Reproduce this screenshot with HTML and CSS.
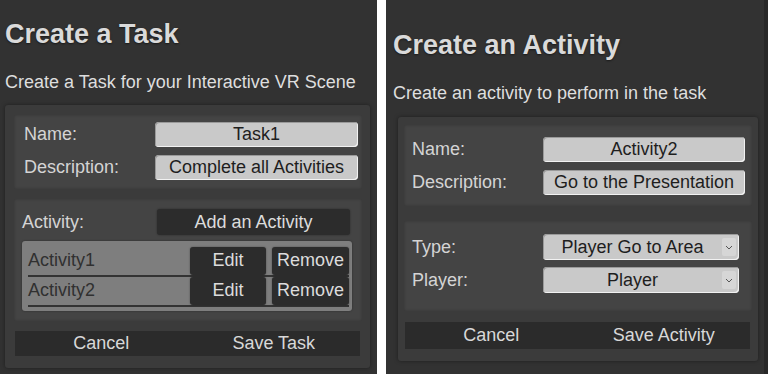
FILE: index.html
```html
<!DOCTYPE html>
<html lang="en">
<head>
    <meta charset="utf-8">
    <title>Task Editor</title>
    <link rel="stylesheet" href="styles.css">
</head>
<body>
    <div class="screens">
        <!-- Pannello task -->
        <div class="panel panel-task">
            <div class="title">Create a Task</div>
            <div class="subtitle">Create a Task for your Interactive VR Scene</div>
            <div class="card">
                <div class="section sec-info">
                    <div class="row">
                        <span class="label">Name:</span>
                        <div class="field">Task1</div>
                    </div>
                    <div class="row">
                        <span class="label">Description:</span>
                        <div class="field">Complete all Activities</div>
                    </div>
                </div>
                <div class="section sec-activities">
                    <div class="row">
                        <span class="label">Activity:</span>
                        <button class="dark-btn add-btn">Add an Activity</button>
                    </div>
                    <div class="activity-list">
                        <div class="activity">
                            <span class="activity-name">Activity1</span>
                            <button class="dark-btn small-btn">Edit</button>
                            <button class="dark-btn small-btn">Remove</button>
                        </div>
                        <div class="activity">
                            <span class="activity-name">Activity2</span>
                            <button class="dark-btn small-btn">Edit</button>
                            <button class="dark-btn small-btn">Remove</button>
                        </div>
                    </div>
                </div>
                <div class="actions">
                    <button class="action">Cancel</button>
                    <button class="action">Save Task</button>
                </div>
            </div>
        </div>

        <!-- Pannello activity -->
        <div class="panel panel-activity">
            <div class="title">Create an Activity</div>
            <div class="subtitle">Create an activity to perform in the task</div>
            <div class="card">
                <div class="section sec-info">
                    <div class="row">
                        <span class="label">Name:</span>
                        <div class="field">Activity2</div>
                    </div>
                    <div class="row">
                        <span class="label">Description:</span>
                        <div class="field">Go to the Presentation</div>
                    </div>
                </div>
                <div class="section sec-type">
                    <div class="row">
                        <span class="label">Type:</span>
                        <div class="field select">
                            <span class="select-value">Player Go to Area</span>
                            <span class="select-arrow"><svg width="8" height="5" viewBox="0 0 8 5"><path d="M1 1 L4 4 L7 1" fill="none" stroke="#555" stroke-width="1"/></svg></span>
                        </div>
                    </div>
                    <div class="row">
                        <span class="label">Player:</span>
                        <div class="field select">
                            <span class="select-value">Player</span>
                            <span class="select-arrow"><svg width="8" height="5" viewBox="0 0 8 5"><path d="M1 1 L4 4 L7 1" fill="none" stroke="#555" stroke-width="1"/></svg></span>
                        </div>
                    </div>
                </div>
                <div class="actions">
                    <button class="action">Cancel</button>
                    <button class="action">Save Activity</button>
                </div>
            </div>
        </div>
    </div>
</body>
</html>
```

FILE: styles.css
```css
body {
    margin: 0;
    background-color: #ffffff;
    font-family: 'Liberation Sans', Arial, sans-serif;
}
.screens {
    display: flex;
    gap: 9px;
    height: 374px;
}
.panel {
    background-color: #323232;
    color: #d6d6d6;
    box-sizing: border-box;
    height: 374px;
}
.panel-task {
    width: 377px;
    padding: 19px 7px 0 5px;
}
.panel-activity {
    width: 382px;
    padding: 30px 6px 0 7px;
    border-right: 4px solid #282828;
}
.title {
    font-size: 27px;
    font-weight: bold;
    line-height: 30px;
    color: #dadada;
    text-shadow: 0 1px 2px rgba(0, 0, 0, 0.5);
}
.subtitle {
    font-size: 18px;
    line-height: 21px;
    margin-top: 23px;
    color: #dedede;
}
.card {
    background-color: #3b3b3b;
    box-shadow: 0 0 4px rgba(0, 0, 0, 0.4);
    border-radius: 3px;
    display: flex;
    flex-direction: column;
}
.panel-task .card {
    margin-top: 12px;
    padding: 10px 8px 12px 9px;
    gap: 10px;
}
.panel-activity .card {
    margin: 13px 0 0 5px;
    padding: 8px 6px 12px 6px;
}
.section {
    background-color: #444444;
    display: flex;
    flex-direction: column;
    box-shadow: inset 0 0 3px rgba(0, 0, 0, 0.25);
}
.panel-task .sec-info {
    padding: 7px 4px 9px 10px;
    gap: 8px;
}
.panel-task .sec-activities {
    padding: 10px 10px 10px 8px;
    gap: 6px;
}
.panel-activity .sec-info {
    padding: 12px 7px 11px 8px;
    gap: 8px;
}
.panel-activity .sec-type {
    margin-top: 15px;
    padding: 13px 13px 18px 8px;
    gap: 7px;
}
.panel-activity .actions {
    margin-top: 11px;
}
.row {
    display: flex;
    align-items: center;
    justify-content: space-between;
}
.label {
    font-size: 18px;
    line-height: 21px;
    color: #d4d4d4;
}
.field {
    width: 203px;
    height: 25px;
    box-sizing: border-box;
    background-color: #c9c9c9;
    border-radius: 4px;
    box-shadow: inset -1px -1px 0 #f2f2f2, inset 1px 1px 0 #9a9a9a;
    color: #1e1e1e;
    font-size: 18px;
    display: flex;
    align-items: center;
    justify-content: center;
}
.panel-activity .field {
    width: 202px;
}
.panel-activity .field.select {
    width: 196px;
    height: 26px;
    justify-content: space-between;
    padding: 0 3px 0 0;
}
.select-value {
    flex: 1;
    text-align: center;
}
.select-arrow {
    width: 14px;
    height: 18px;
    background-color: #d6d6d6;
    border-radius: 2px;
    display: flex;
    align-items: center;
    justify-content: center;
}
.dark-btn {
    background-color: #2c2c2c;
    color: #dcdcdc;
    border: none;
    border-radius: 3px;
    font-family: 'Liberation Sans', Arial, sans-serif;
    font-size: 18px;
    padding: 0;
    box-shadow: 0 0 2px rgba(0, 0, 0, 0.4);
}
.add-btn {
    width: 193px;
    height: 26px;
    margin-right: 2px;
}
.activity-list {
    background-color: #7e7e7e;
    border-radius: 3px;
    padding: 6px 3px 4px 6px;
    box-shadow: 0 0 2px rgba(0, 0, 0, 0.4);
}
.activity {
    display: flex;
    align-items: center;
    gap: 6px;
    height: 30px;
    border-bottom: 2px solid #333333;
    box-sizing: border-box;
    padding-bottom: 1px;
}
.activity-name {
    flex: 1;
    font-size: 18px;
    color: #303030;
}
.small-btn {
    height: 28px;
    width: 76px;
}
.small-btn + .small-btn {
    width: 77px;
}
.actions {
    display: flex;
    background-color: #2b2b2b;
    height: 25px;
    margin-left: 1px;
    margin-right: 2px;
}
.action {
    flex: 1;
    background: none;
    border: none;
    color: #d8d8d8;
    font-family: 'Liberation Sans', Arial, sans-serif;
    font-size: 18px;
    padding: 0;
}
.panel-activity .actions {
    height: 27px;
}
```
